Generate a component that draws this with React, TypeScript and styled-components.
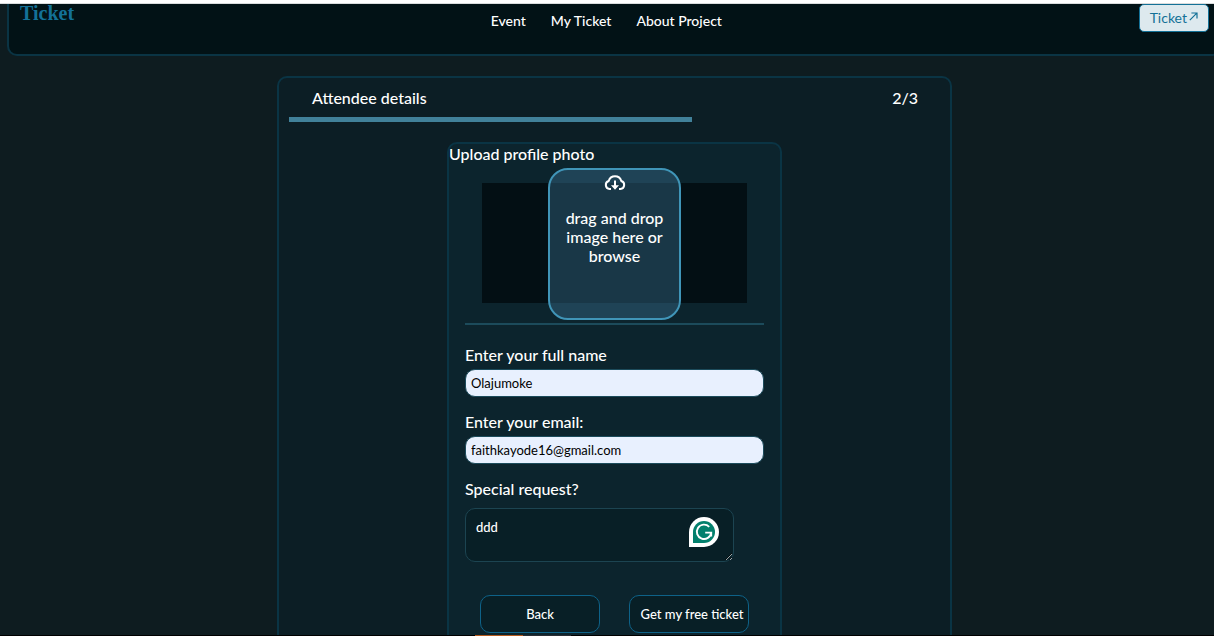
import React from "react";
import styled, { createGlobalStyle } from "styled-components";

const GlobalStyle = createGlobalStyle`
  *, *::before, *::after { box-sizing: border-box; }
  body {
    margin: 0;
    background: #0e1c20;
    color: #fff;
    font-family: Lato, "Open Sans", sans-serif;
    font-size: 16px;
    font-weight: 500;
    line-height: 19px;
  }
  h2, p { margin: 0; font: inherit; }
`;

const Screen = styled.div`
  display: flex;
  flex-direction: column;
  height: 100vh;
  overflow: hidden;
  border-top: 3px solid #fff;
`;

const Viewport = styled.div`
  flex: 1;
  min-height: 0;
  overflow: hidden;
  border-top: 1px solid #d9dcdd;
`;

const Page = styled.div`
  margin: 0 -8px 0 7px;
`;

const Header = styled.header`
  display: flex;
  justify-content: space-between;
  align-items: flex-start;
  height: 52px;
  padding: 0 11px;
  background: #021216;
  border: 2px solid #0a3444;
  border-top: 0;
  border-radius: 0 0 10px 10px;
`;

const Logo = styled.a`
  color: #137197;
  font: bold 20px/19px "Old English Text MT", "Liberation Serif", serif;
  text-decoration: none;
`;

const Nav = styled.nav`
  display: flex;
  gap: 25px;
  padding-top: 7px;
  font-size: 14px;
`;

const NavLink = styled.a`
  color: #fff;
  text-decoration: none;
`;

const TicketButton = styled.button`
  display: flex;
  align-items: center;
  gap: 2px;
  height: 28px;
  padding: 0 10px 1px;
  border: 1px solid #137197;
  border-radius: 5px;
  background: #dde9ee;
  color: #137197;
  font: 14px Lato, sans-serif;

  svg {
    margin-bottom: 2px;
  }
`;

const Card = styled.section`
  width: 675px;
  max-width: 100%;
  margin: 20px auto 0;
  padding: 10px 10px 40px;
  border: 2px solid #0a3444;
  border-radius: 10px;
  background: #0c1e25;
`;

const CardHead = styled.div`
  display: flex;
  justify-content: space-between;
  padding: 0 22px 0 23px;
`;

const Progress = styled.div`
  width: 403px;
  max-width: 100%;
  height: 5px;
  margin: 10px 0 20px;
  background: #41819a;
`;

const Form = styled.form`
  width: 335px;
  max-width: 100%;
  margin: 0 auto;
  padding-bottom: 20px;
  border: 2px solid #0a3444;
  border-radius: 10px;
  background: #0c242d;
`;

const UploadArea = styled.div`
  height: 152px;
  margin: 5px 33px 0;
  padding-top: 15px;
`;

const UploadBand = styled.div`
  display: flex;
  align-items: flex-start;
  justify-content: center;
  height: 120px;
  background: #030f14;
`;

const DropZone = styled.button`
  display: flex;
  flex: none;
  flex-direction: column;
  align-items: center;
  gap: 13px;
  width: 133px;
  height: 152px;
  margin-top: -15px;
  padding: 1px 14px;
  border: 2px solid #4095b8;
  border-radius: 20px;
  background: rgba(60, 116, 148, 0.4);
  color: #fff;
  font: 500 16px/19px Lato, sans-serif;
`;

const Fields = styled.div`
  display: flex;
  flex-direction: column;
  gap: 15px;
  margin: 3px 16px 0;
  padding-top: 20px;
  border-top: 2px solid #1c4b5b;
`;

const Field = styled.div<{ $gap: number }>`
  display: flex;
  flex-direction: column;
  gap: ${(p) => p.$gap}px;
`;

const Input = styled.input`
  width: 100%;
  height: 28px;
  padding: 0 5px;
  border: 1px solid #1c4b5b;
  border-radius: 10px;
  background: #e8f0fe;
  color: #000;
  font: 13px Lato, sans-serif;
`;

const AreaWrap = styled.div`
  position: relative;
  display: flex;
  width: 269px;
  max-width: 100%;
`;

const TextArea = styled.textarea`
  width: 100%;
  height: 54px;
  padding: 10px;
  border: 1px solid #1c4451;
  border-radius: 10px;
  background: #081f26;
  color: #fff;
  font: 500 13px Lato, sans-serif;
`;

const Badge = styled.svg`
  position: absolute;
  top: 9px;
  right: 15px;
`;

const Actions = styled.div`
  display: flex;
  justify-content: space-between;
  margin: 33px 31px 0;
`;

const ActionButton = styled.button<{ $indent?: boolean }>`
  width: 120px;
  height: 38px;
  padding: ${(p) => (p.$indent ? "0 4px 0 10px" : "0")};
  border: 1px solid #0e6288;
  border-radius: 10px;
  background: #081f26;
  color: #fff;
  font: 500 13px Lato, sans-serif;
  white-space: nowrap;
`;

const Taskbar = styled.div`
  display: flex;
  flex: none;
  height: 1px;
  padding-left: 475px;
  background: #000;
`;

const TaskMark = styled.span<{ $color: string }>`
  width: 48px;
  background: ${(p) => p.$color};
`;

function ArrowUpRight() {
  return (
    <svg width="9" height="9" viewBox="0 0 9 9" fill="none" stroke="currentColor" strokeWidth="1.2" aria-hidden="true">
      <path d="M.8 8.2 7.8 1.2M2.4 1h5.6v5.6" />
    </svg>
  );
}

function CloudDownload() {
  return (
    <svg width="24" height="24" viewBox="0 0 24 24" fill="none" aria-hidden="true">
      <path
        d="M8 18H6.6A4.1 4.1 0 0 1 5.7 10 6.6 6.6 0 0 1 18.3 10 4.1 4.1 0 0 1 17.4 18H16"
        stroke="currentColor"
        strokeWidth="2"
        strokeLinejoin="round"
      />
      <path d="M11 9.6h2v4.6h3L12 18.8 8 14.2h3Z" fill="currentColor" />
    </svg>
  );
}

function AssistantBadge() {
  return (
    <Badge width="30" height="30" viewBox="0 0 30 30" fill="none" aria-hidden="true">
      <path d="M15 0a15 15 0 0 1 0 30H0V15A15 15 0 0 1 15 0Z" fill="#fff" />
      <path d="M15 4a11 11 0 0 1 0 22H4V15A11 11 0 0 1 15 4Z" fill="#03806d" />
      <path d="M20.2 9.8A7.2 7.2 0 1 0 22.2 15.6H16.2M22.2 15v4.6" stroke="#fff" strokeWidth="1.9" />
    </Badge>
  );
}

export default function App() {
  return (
    <>
      <GlobalStyle />
      <Screen>
        <Viewport>
          <Page>
            <Header>
              <Logo href="#">Ticket</Logo>
              <Nav>
                <NavLink href="#">Event</NavLink>
                <NavLink href="#">My Ticket</NavLink>
                <NavLink href="#">About Project</NavLink>
              </Nav>
              <TicketButton type="button">
                Ticket
                <ArrowUpRight />
              </TicketButton>
            </Header>
            <Card>
              <CardHead>
                <h2>Attendee details</h2>
                <span>2/3</span>
              </CardHead>
              <Progress />
              <Form onSubmit={(e) => e.preventDefault()}>
                <p>Upload profile photo</p>
                <UploadArea>
                  <UploadBand>
                    <DropZone type="button">
                      <CloudDownload />
                      <span>drag and drop image here or browse</span>
                    </DropZone>
                  </UploadBand>
                </UploadArea>
                <Fields>
                  <Field $gap={5}>
                    <label htmlFor="name">Enter your full name</label>
                    <Input id="name" defaultValue="Olajumoke" />
                  </Field>
                  <Field $gap={5}>
                    <label htmlFor="email">Enter your email:</label>
                    <Input id="email" type="email" defaultValue="faithkayode16@gmail.com" />
                  </Field>
                  <Field $gap={10}>
                    <label htmlFor="request">Special request?</label>
                    <AreaWrap>
                      <TextArea id="request" defaultValue="ddd" />
                      <AssistantBadge />
                    </AreaWrap>
                  </Field>
                </Fields>
                <Actions>
                  <ActionButton type="button">Back</ActionButton>
                  <ActionButton type="submit" $indent>
                    Get my free ticket
                  </ActionButton>
                </Actions>
              </Form>
            </Card>
          </Page>
        </Viewport>
        <Taskbar>
          <TaskMark $color="#b5591c" />
          <TaskMark $color="#2a2d33" />
        </Taskbar>
      </Screen>
    </>
  );
}
